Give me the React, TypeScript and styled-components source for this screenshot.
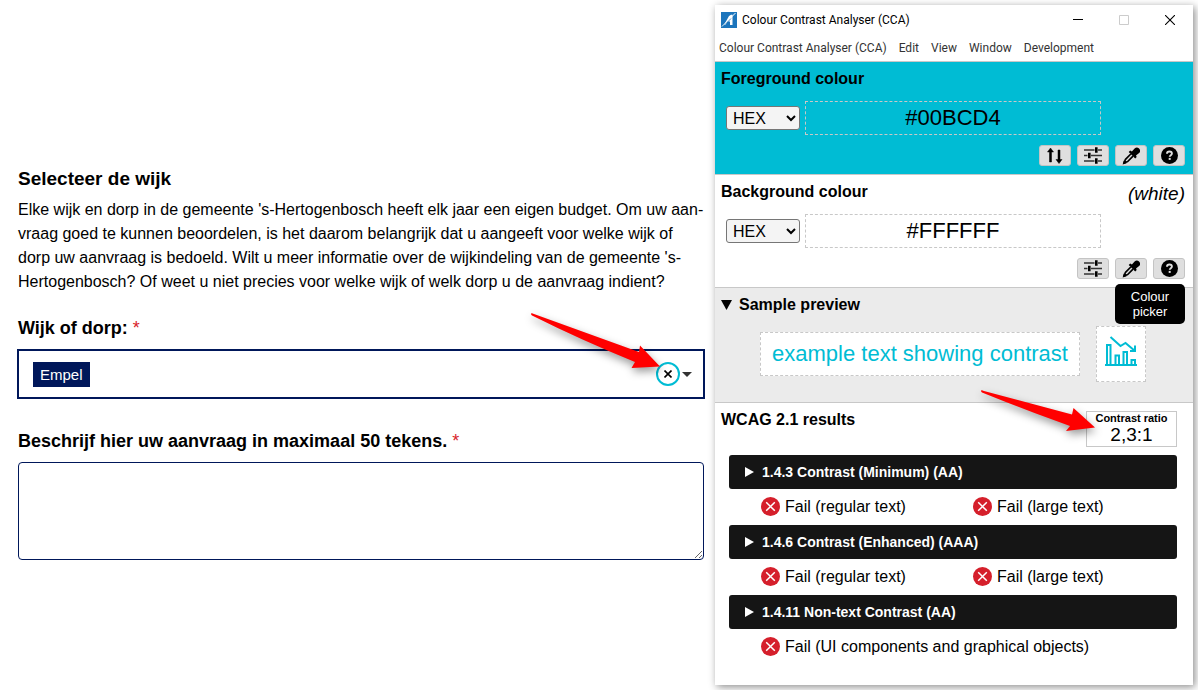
import React, { useState } from "react";
import styled, { createGlobalStyle, css } from "styled-components";

const navy = "#00175a";
const cyan = "#00bcd4";
const line = "#c8c8c8";

const GlobalStyle = createGlobalStyle`
  *, *::before, *::after { box-sizing: border-box; }
  body {
    margin: 0;
    background: #fff;
    color: #000;
    font-family: "Liberation Sans", Arial, sans-serif;
    font-size: 16px;
  }
  button, input, select, textarea { font: inherit; color: inherit; margin: 0; }
  button { border: 0; padding: 0; background: none; }
`;

const Page = styled.div`
  display: grid;
  grid-template-columns: minmax(0, 1fr) minmax(320px, 478px);
  align-items: start;
  gap: 10px;
  min-height: 100vh;
  padding: 5px 5px 5px 17px;
`;

/* ---------- Application form ---------- */

const Form = styled.form`
  display: flex;
  flex-direction: column;
  padding: 162px 1px 0;
`;

const FormTitle = styled.h1`
  margin: 0 0 7px;
  font-size: 19px;
  line-height: 24px;
`;

const Intro = styled.p`
  margin: 0 0 22px;
  line-height: 24px;
`;

const Field = styled.div`
  display: flex;
  flex-direction: column;
  gap: 9px;
  margin-bottom: 30px;
`;

const Label = styled.label`
  font-size: 18px;
  font-weight: bold;
  line-height: 24px;
`;

const Required = styled.span`
  color: #d8232a;
  font-weight: normal;
`;

const Combo = styled.div`
  position: relative;
  display: flex;
  align-items: center;
  height: 50px;
  margin: 0 -1px;
  padding: 0 10px 0 14px;
  border: 2px solid ${navy};
`;

const Chip = styled.span`
  padding: 0 7px;
  background: ${navy};
  color: #fff;
  font-size: 15px;
  line-height: 25px;
`;

const ComboInput = styled.input`
  flex: 1;
  min-width: 0;
  border: 0;
  outline: 0;
  background: none;
`;

const ClearButton = styled.button`
  display: grid;
  place-items: center;
  width: 24px;
  height: 24px;
  border: 2px solid ${cyan};
  border-radius: 50%;
`;

const CaretButton = styled.button`
  display: grid;
  place-items: center;
  width: 13px;
  height: 24px;
`;

const TextArea = styled.textarea`
  height: 98px;
  border: 1px solid ${navy};
  border-radius: 4px;
  background: #fff;
`;

/* ---------- Analyser window ---------- */

const Window = styled.section`
  display: flex;
  flex-direction: column;
  padding-bottom: 20px;
  background: #fff;
  box-shadow: 2px 2px 8px rgba(0, 0, 0, 0.45);
`;

const TitleBar = styled.header`
  display: flex;
  align-items: center;
  gap: 5px;
  height: 30px;
  padding-left: 6px;
  font-family: Roboto, sans-serif;
  font-size: 12px;
`;

const TitleText = styled.span`
  flex: 1;
`;

const WindowControls = styled.div`
  display: flex;
`;

const WindowControl = styled.button`
  display: grid;
  place-items: center;
  width: 46px;
  height: 30px;
`;

const MenuBar = styled.nav`
  display: flex;
  align-items: center;
  gap: 12px;
  height: 26px;
  padding-left: 4px;
`;

const MenuItem = styled.button`
  color: #333;
  font-family: Roboto, sans-serif;
  font-size: 12px;
  line-height: 16px;
`;

const Section = styled.section<{ $bg?: string }>`
  border-top: 1px solid ${line};
  background: ${(p) => p.$bg ?? "#fff"};
`;

const SectionHead = styled.div`
  display: flex;
  justify-content: space-between;
  align-items: flex-start;
  height: 26px;
  padding: 7px 8px 0 6px;
`;

const SectionTitle = styled.h2`
  margin: 0;
  font-size: 16px;
  line-height: 20px;
`;

const ColourName = styled.em`
  font-size: 19px;
  line-height: 24px;
`;

const ValueRow = styled.div`
  display: flex;
  align-items: center;
  gap: 5px;
  padding: 13px 92px 10px 11px;
`;

const FormatSelect = styled.select`
  width: 74px;
  height: 24px;
  padding: 0 2px;
  border: 1px solid #767676;
  border-radius: 3px;
  background: #f4f4f4;
  color: #000;
`;

const ValueInput = styled.input`
  flex: 1;
  min-width: 0;
  height: 34px;
  padding: 0;
  border: 1px dashed ${line};
  background: transparent;
  font-size: 22px;
  text-align: center;
`;

const ToolRow = styled.div`
  display: flex;
  justify-content: flex-end;
  gap: 6px;
  padding: 0 8px;
  height: 29px;
`;

const ToolWrap = styled.div`
  position: relative;
`;

const ToolButton = styled.button`
  display: grid;
  place-items: center;
  width: 32px;
  height: 21px;
  border: 1px solid #c4c4c4;
  border-radius: 3px;
  background: #dfdfdf;
`;

const Tooltip = styled.span`
  position: absolute;
  z-index: 1;
  top: 26px;
  left: 0;
  width: 70px;
  padding: 5px 0;
  border-radius: 5px;
  background: #000;
  color: #fff;
  font-size: 13px;
  line-height: 15px;
  text-align: center;
`;

const PreviewToggle = styled.button`
  display: flex;
  align-items: center;
  gap: 7px;
  font-size: 16px;
  font-weight: bold;
  line-height: 20px;
`;

const PreviewRow = styled.div`
  display: flex;
  justify-content: center;
  align-items: center;
  gap: 16px;
  padding: 12px 2px 20px 0;
`;

const sample = css`
  display: grid;
  place-items: center;
  border: 1px dashed ${line};
  background: #fff;
  color: ${cyan};
`;

const SampleText = styled.p`
  ${sample}
  width: 320px;
  height: 44px;
  margin: 0;
  font-size: 22px;
`;

const SampleIcon = styled.div`
  ${sample}
  width: 50px;
  height: 56px;
`;

const Results = styled.div`
  display: flex;
  flex-direction: column;
  padding: 8px 16px 0 14px;
`;

const ResultsHead = styled.div`
  display: flex;
  justify-content: space-between;
  margin: 0 0 8px -8px;
`;

const ResultsTitle = styled.h2`
  margin: 0;
  font-size: 16px;
  line-height: 18px;
`;

const Ratio = styled.div`
  position: relative;
  display: flex;
  flex-direction: column;
  align-items: center;
  width: 91px;
  height: 36px;
  border: 1px solid ${line};
`;

const RatioLabel = styled.strong`
  font-size: 11px;
  line-height: 13px;
`;

const RatioValue = styled.span`
  font-size: 19px;
  line-height: 20px;
`;

const Criterion = styled.button`
  display: flex;
  align-items: center;
  gap: 8px;
  height: 34px;
  padding-left: 16px;
  border-radius: 3px;
  background: #151515;
  color: #fff;
  font-size: 14px;
  font-weight: bold;
`;

const Outcomes = styled.ul<{ $single: boolean }>`
  display: grid;
  grid-template-columns: ${(p) => (p.$single ? "1fr" : "1fr 1fr")};
  gap: 8px;
  align-items: center;
  height: 36px;
  margin: 0;
  padding: 0 0 0 32px;
  list-style: none;
`;

const Outcome = styled.li`
  display: flex;
  align-items: flex-start;
  gap: 5px;
  line-height: 20px;
`;

const PointerArrow = styled.svg<{ $right: number; $top: number }>`
  position: absolute;
  z-index: 2;
  right: ${(p) => p.$right}px;
  top: ${(p) => p.$top}px;
  overflow: visible;
  pointer-events: none;
  filter: drop-shadow(1px 4px 4px rgba(0, 0, 0, 0.4));
`;

/* ---------- Icons ---------- */

const SwapIcon = () => (
  <svg width="18" height="17" viewBox="0 0 18 17" aria-hidden="true">
    <path d="M4.500 1 1.500 5h2v10h2V5h2zM13 16.500l3-4h-2V3h-2v9.500h-2z" stroke="#000" strokeWidth="0.500" />
  </svg>
);

const SlidersIcon = () => (
  <svg width="18" height="17" viewBox="0 0 18 17" aria-hidden="true">
    <path d="M0 3h10.500M14 3h4M0 8.500h3.500M7 8.500h11M0 14h10.500M14 14h4" stroke="#333" strokeWidth="1.600" />
    <path d="M12.300 0.200v5.600M5.300 5.700v5.600M12.300 11.200v5.600" stroke="#000" strokeWidth="2.600" />
  </svg>
);

const DropperIcon = () => (
  <svg width="18" height="18" viewBox="0 0 18 18" aria-hidden="true">
    <path d="M8.800 7 3.500 12.300 2 16l3.700-1.500L11 9.200" fill="none" stroke="#000" strokeWidth="1.700" strokeLinejoin="round" />
    <path d="m0.600 17.400 1.200-4 2.800 2.800z" />
    <path d="m6.700 5 1.500-1.500 1.700 1 2.700-2.900a3.100 3.100 0 0 1 4.500 4.400L14 8.600l.7 1.400-1.500 1.500z" />
  </svg>
);

const HelpIcon = () => (
  <svg width="17" height="17" viewBox="0 0 17 17" aria-hidden="true">
    <circle cx="8.500" cy="8.500" r="8.500" />
    <path d="M6 6.700C6 5.200 7 4.500 8.500 4.500s2.400.8 2.400 2c0 1.700-2.200 1.600-2.200 3.300" fill="none" stroke="#e0e0e0" strokeWidth="1.900" />
    <rect x="7.700" y="10.900" width="2" height="2" fill="#e0e0e0" />
  </svg>
);

const FailIcon = () => (
  <svg width="19" height="19" viewBox="0 0 19 19" aria-hidden="true">
    <circle cx="9.500" cy="9.500" r="9.500" fill="#d51f2b" />
    <path d="m5.200 5.200 8.600 8.600M13.800 5.200l-8.600 8.600" stroke="#fff" strokeWidth="1.500" />
  </svg>
);

const ChartIcon = () => (
  <svg width="32" height="36" viewBox="0 0 32 36" fill="none" stroke={cyan} strokeWidth="2" aria-hidden="true">
    <path d="M0 29h32M2 29V9h3.500v20M10.500 29V19.500H14V29M18.500 29V16H22v13M26.500 29v-5H30v5" />
    <path d="M5.500 1l10 9 5-3 9.500 8M30 9.500V15h-5" />
  </svg>
);

const AppIcon = () => (
  <svg width="16" height="16" viewBox="0 0 16 16" aria-hidden="true">
    <rect width="16" height="16" fill="#1c75bc" />
    <path d="M3 13 8 4l2-1.200h1.500V13H9V9.500H6.500L4.500 13z" fill="#fff" />
    <path d="M1 14.500 14.500 1" stroke="#fff" strokeWidth="1" />
    <path d="M2.500 14.200 10 6.500" stroke="#1c75bc" strokeWidth="0.800" />
  </svg>
);

const Triangle = ({ down = false, fill = "#000" }) => (
  <svg width={down ? 11 : 9} height={10} viewBox={down ? "0 0 11 10" : "0 0 9 10"} aria-hidden="true">
    <path d={down ? "M0 0h11L5.500 10z" : "M0 0v10l9-5z"} fill={fill} />
  </svg>
);

/* ---------- Parts ---------- */

type ColourPanelProps = {
  id: string;
  title: string;
  value: string;
  bg?: string;
  name?: string;
  swap?: boolean;
  tip?: boolean;
};

const ColourPanel = ({ id, title, value, bg, name, swap, tip }: ColourPanelProps) => (
  <Section $bg={bg}>
    <SectionHead>
      <SectionTitle id={`${id}-title`}>{title}</SectionTitle>
      {name && <ColourName>{name}</ColourName>}
    </SectionHead>
    <ValueRow>
      <FormatSelect aria-label={`${title} format`} defaultValue="HEX">
        <option>HEX</option>
        <option>RGB</option>
        <option>HSL</option>
      </FormatSelect>
      <ValueInput aria-labelledby={`${id}-title`} defaultValue={value} />
    </ValueRow>
    <ToolRow>
      {swap && (
        <ToolButton type="button" aria-label="Swap colours"><SwapIcon /></ToolButton>
      )}
      <ToolButton type="button" aria-label="Colour sliders"><SlidersIcon /></ToolButton>
      <ToolWrap>
        <ToolButton type="button" aria-label="Colour picker"><DropperIcon /></ToolButton>
        {tip && <Tooltip role="tooltip">Colour picker</Tooltip>}
      </ToolWrap>
      <ToolButton type="button" aria-label="Help"><HelpIcon /></ToolButton>
    </ToolRow>
  </Section>
);

const criteria = [
  { title: "1.4.3 Contrast (Minimum) (AA)", outcomes: ["Fail (regular text)", "Fail (large text)"] },
  { title: "1.4.6 Contrast (Enhanced) (AAA)", outcomes: ["Fail (regular text)", "Fail (large text)"] },
  { title: "1.4.11 Non-text Contrast (AA)", outcomes: ["Fail (UI components and graphical objects)"] },
];

const menus = ["Colour Contrast Analyser (CCA)", "Edit", "View", "Window", "Development"];

export default function App() {
  const [district, setDistrict] = useState("Empel");

  return (
    <>
      <GlobalStyle />
      <Page>
        <Form lang="nl">
          <FormTitle>Selecteer de wijk</FormTitle>
          <Intro>
            Elke wijk en dorp in de gemeente 's-Hertogenbosch heeft elk jaar een eigen budget. Om uw
            aan&shy;vraag goed te kunnen beoordelen, is het daarom belangrijk dat u aangeeft voor welke
            wijk of dorp uw aanvraag is bedoeld. Wilt u meer informatie over de wijkindeling van de
            gemeente 's-Hertogenbosch? Of weet u niet precies voor welke wijk of welk dorp u de aanvraag
            indient?
          </Intro>
          <Field>
            <Label htmlFor="district">
              Wijk of dorp: <Required>*</Required>
            </Label>
            <Combo>
              {district && <Chip>{district}</Chip>}
              <ComboInput id="district" role="combobox" aria-expanded="false" />
              <ClearButton type="button" aria-label="Wissen" onClick={() => setDistrict("")}>
                <svg width="8" height="8" viewBox="0 0 8 8" aria-hidden="true">
                  <path d="m0.500 0.500 7 7M7.500 0.500l-7 7" stroke="#000" strokeWidth="1.600" />
                </svg>
              </ClearButton>
              <CaretButton type="button" aria-label="Openen">
                <svg width="10" height="5" viewBox="0 0 10 5" aria-hidden="true">
                  <path d="M0 0h10L5 5z" fill="#333" />
                </svg>
              </CaretButton>
              <PointerArrow $right={43} $top={-38} width="129" height="55" viewBox="0 0 129 55" aria-hidden="true">
                <path d="M0 .5Q1 0 3 1L108 39l1-6.500L129 53.500l-28.500 1.500 3.500-6Q50 27 1 2.500 0 2 0 .5z" fill="#f00" />
              </PointerArrow>
            </Combo>
          </Field>
          <Field>
            <Label htmlFor="request">
              Beschrijf hier uw aanvraag in maximaal 50 tekens. <Required>*</Required>
            </Label>
            <TextArea id="request" />
          </Field>
        </Form>

        <Window aria-label="Colour Contrast Analyser (CCA)">
          <TitleBar>
            <AppIcon />
            <TitleText>Colour Contrast Analyser (CCA)</TitleText>
            <WindowControls>
              <WindowControl type="button" aria-label="Minimise">
                <svg width="10" height="10" viewBox="0 0 10 10" aria-hidden="true">
                  <path d="M0 4.500h10" stroke="#000" />
                </svg>
              </WindowControl>
              <WindowControl type="button" aria-label="Maximise" disabled>
                <svg width="10" height="10" viewBox="0 0 10 10" aria-hidden="true">
                  <path d="M.5.5h9v9h-9z" fill="none" stroke="#ccc" />
                </svg>
              </WindowControl>
              <WindowControl type="button" aria-label="Close">
                <svg width="10" height="10" viewBox="0 0 10 10" aria-hidden="true">
                  <path d="m0 0 10 10M10 0 0 10" stroke="#000" strokeWidth="1.100" />
                </svg>
              </WindowControl>
            </WindowControls>
          </TitleBar>
          <MenuBar>
            {menus.map((m) => (
              <MenuItem key={m} type="button">{m}</MenuItem>
            ))}
          </MenuBar>

          <ColourPanel id="fg" title="Foreground colour" value="#00BCD4" bg={cyan} swap />
          <ColourPanel id="bg" title="Background colour" value="#FFFFFF" name="(white)" tip />

          <Section $bg="#ebebeb">
            <SectionHead>
              <PreviewToggle type="button" aria-expanded="true">
                <Triangle down />
                Sample preview
              </PreviewToggle>
            </SectionHead>
            <PreviewRow>
              <SampleText>example text showing contrast</SampleText>
              <SampleIcon><ChartIcon /></SampleIcon>
            </PreviewRow>
          </Section>

          <Section>
            <Results>
              <ResultsHead>
                <ResultsTitle>WCAG 2.1 results</ResultsTitle>
                <Ratio>
                  <RatioLabel>Contrast ratio</RatioLabel>
                  <RatioValue>2,3:1</RatioValue>
                  <PointerArrow $right={81} $top={-22} width="114" height="41" viewBox="0 0 114 41" aria-hidden="true">
                    <path d="M0 .5Q1 0 3 1L91 24.500l1.500-6.500L114 37.500 85 41l4-5Q44 20 1 2.500 0 2 0 .5z" fill="#f00" />
                  </PointerArrow>
                </Ratio>
              </ResultsHead>
              {criteria.map((c) => (
                <React.Fragment key={c.title}>
                  <Criterion type="button" aria-expanded="false">
                    <Triangle fill="#fff" />
                    {c.title}
                  </Criterion>
                  <Outcomes $single={c.outcomes.length === 1}>
                    {c.outcomes.map((o) => (
                      <Outcome key={o}><FailIcon />{o}</Outcome>
                    ))}
                  </Outcomes>
                </React.Fragment>
              ))}
            </Results>
          </Section>
        </Window>
      </Page>
    </>
  );
}
